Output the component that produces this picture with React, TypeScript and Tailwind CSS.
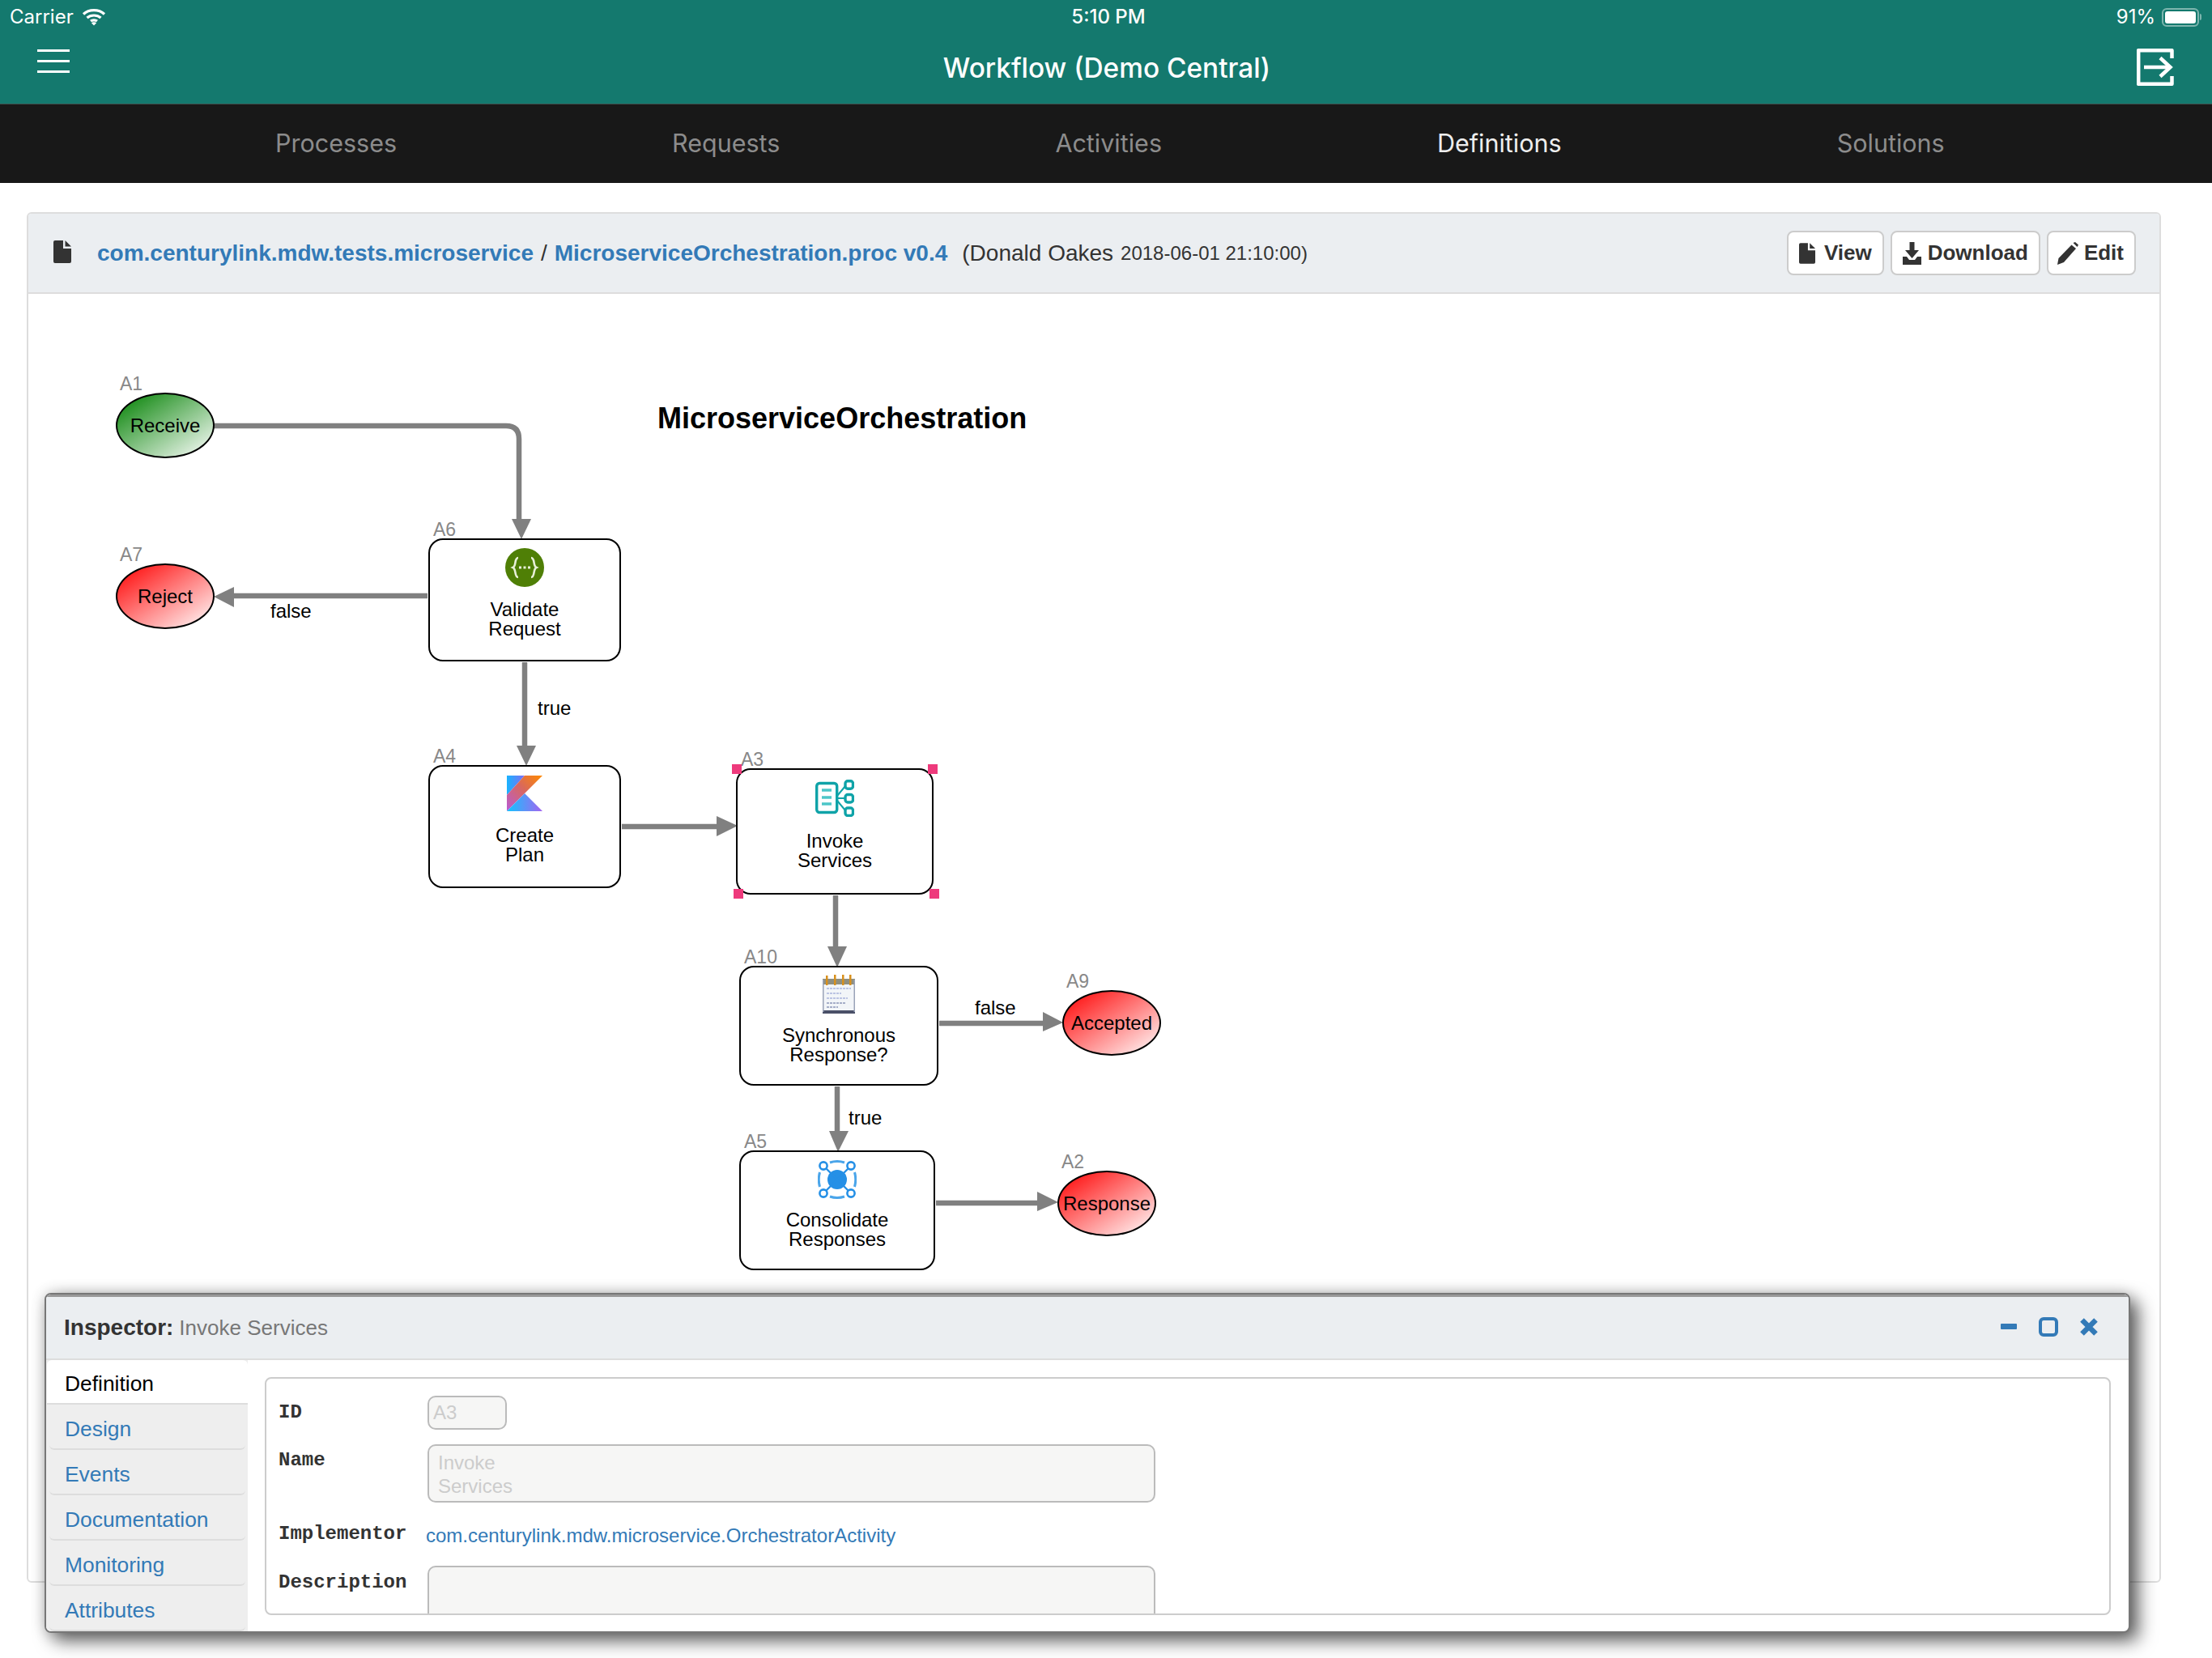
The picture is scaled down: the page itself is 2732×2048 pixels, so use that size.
import type { ReactNode } from 'react';

const navItems = ['Processes', 'Requests', 'Activities', 'Definitions', 'Solutions'];
const tabs = ['Design', 'Events', 'Documentation', 'Monitoring', 'Attributes'];

// -----------------------------------------------------------------------------
// Icons
// -----------------------------------------------------------------------------

function WifiIcon() {
  return (
    <svg width="30" height="22" viewBox="0 0 30 22" fill="none" stroke="white" strokeWidth="3.2">
      <path d="M2 7.5C9 1 21 1 28 7.5" />
      <path d="M6.5 12C11 8 19 8 23.5 12" />
      <path d="M11 16C13 14.4 17 14.4 19 16" />
      <path d="M15 21.5L11.8 18.2C13.5 17 16.5 17 18.2 18.2Z" fill="white" stroke="none" />
    </svg>
  );
}

function ExitIcon() {
  return (
    <svg width="46" height="46" viewBox="0 0 46 46" fill="none" stroke="white" strokeWidth="4.5">
      <path d="M43.5 12V2.2H2.2V43.8H43.5V34" strokeLinejoin="round" />
      <path d="M9 23H41" />
      <path d="M29 11.5L41.5 23L29 34.5" />
    </svg>
  );
}

function FileIcon({ className }: { className: string }) {
  return (
    <svg className={className} viewBox="0 0 22 28" fill="#333">
      <path d="M0 2Q0 0 2 0H12V10H22V26Q22 28 20 28H2Q0 28 0 26Z" />
      <path d="M14.5 0L22 7.5H14.5Z" />
    </svg>
  );
}

function DownloadIcon() {
  return (
    <svg className="h-[28px] w-[23px]" viewBox="0 0 23 28" fill="#333">
      <path d="M8.5 0H14.5V10H20L11.5 20L3 10H8.5Z" />
      <path d="M0 18H5L8 22H15L18 18H23V28H0Z" />
    </svg>
  );
}

function PencilIcon() {
  return (
    <svg className="h-[28px] w-[27px]" viewBox="0 0 27 28" fill="#333">
      <path d="M18.5 3.5L24 8L9 25L1 28L2.5 20Z" />
      <path d="M20.5 1L23 0L27 3.5L25.5 6Z" />
    </svg>
  );
}

function SwaggerIcon() {
  return (
    <svg width="48" height="48" viewBox="0 0 48 48">
      <circle cx="24" cy="24" r="24" fill="#4f7f06" />
      <g fill="none" stroke="#e8f0d8" strokeWidth="2.6">
        <path d="M16 12C11 12 14 22 9.5 24C14 26 11 36 16 36" />
        <path d="M32 12C37 12 34 22 38.5 24C34 26 37 36 32 36" />
      </g>
      <g fill="#e8f0d8">
        <rect x="17" y="22.5" width="3" height="3" />
        <rect x="22.5" y="22.5" width="3" height="3" />
        <rect x="28" y="22.5" width="3" height="3" />
      </g>
    </svg>
  );
}

function KotlinIcon() {
  return (
    <svg width="44" height="44" viewBox="0 0 44 44">
      <defs>
        <linearGradient id="kotlinBand" x1="0" y1="1" x2="1" y2="0">
          <stop offset="0" stopColor="#b75bd8" />
          <stop offset="0.55" stopColor="#d9685c" />
          <stop offset="1" stopColor="#ff8a00" />
        </linearGradient>
        <linearGradient id="kotlinTop" x1="0" y1="0" x2="1" y2="0">
          <stop offset="0" stopColor="#18b4ff" />
          <stop offset="1" stopColor="#7f6cf5" />
        </linearGradient>
        <linearGradient id="kotlinBottom" x1="0" y1="0.5" x2="1" y2="0.5">
          <stop offset="0" stopColor="#12c5ff" />
          <stop offset="1" stopColor="#a463f0" />
        </linearGradient>
      </defs>
      <path d="M0 0H22L0 24Z" fill="url(#kotlinTop)" />
      <path d="M22 0H44L22 22L0 44V24Z" fill="url(#kotlinBand)" />
      <path d="M22 22L44 44H0Z" fill="url(#kotlinBottom)" />
    </svg>
  );
}

function ServicesIcon() {
  return (
    <svg width="48" height="46" viewBox="0 0 48 46" fill="none" stroke="#0fa3a8" strokeWidth="3.4">
      <rect x="1.7" y="4.5" width="25" height="36" rx="3.5" />
      <g stroke="#4cc6c8" strokeWidth="3.5">
        <path d="M8 13H20" />
        <path d="M8 22H20" />
        <path d="M8 30H20" />
      </g>
      <rect x="37" y="1.7" width="9.5" height="9.5" rx="3" />
      <rect x="37" y="18.5" width="9.5" height="9.5" rx="3" />
      <rect x="37" y="35" width="9.5" height="9.5" rx="3" />
      <path d="M27 20L37 8M27 23H37M27 26L37 38" strokeWidth="2" />
    </svg>
  );
}

function NotepadIcon() {
  return (
    <svg width="42" height="48" viewBox="0 0 42 48">
      <rect x="1" y="6" width="40" height="42" fill="#f2f5f8" />
      <rect x="1" y="5" width="40" height="7" fill="#8f8f80" />
      <rect x="1" y="44" width="40" height="4" fill="#4a5068" />
      <rect x="1" y="6" width="1.5" height="40" fill="#9aa3b8" />
      <rect x="39.5" y="6" width="1.5" height="40" fill="#9aa3b8" />
      <g fill="#d8901c">
        <rect x="5" y="1" width="2.5" height="12" />
        <rect x="15" y="0" width="2.5" height="13" />
        <rect x="25" y="0" width="2.5" height="13" />
        <rect x="34" y="0" width="2.5" height="13" />
      </g>
      <g stroke="#a9b4dc" strokeWidth="1.6" strokeDasharray="3 1">
        <path d="M6 17H36" />
        <path d="M6 23H24" />
        <path d="M6 29H32" />
        <path d="M6 35H30" stroke="#8c96b8" />
        <path d="M6 40H20" stroke="#8c96b8" />
      </g>
    </svg>
  );
}

function ConsolidateIcon() {
  return (
    <svg width="48" height="48" viewBox="0 0 48 48" fill="none" stroke="#2590e6" strokeWidth="2.4">
      <circle cx="24" cy="24" r="12" fill="#2590e6" stroke="none" />
      <g strokeWidth="2.6">
        <circle cx="7" cy="7" r="4.6" />
        <circle cx="41" cy="7" r="4.6" />
        <circle cx="7" cy="41" r="4.6" />
        <circle cx="41" cy="41" r="4.6" />
      </g>
      <path d="M10 10L38 38M38 10L10 38" />
      <g stroke="#4aa5ea" strokeWidth="3">
        <path d="M15 3Q24 0 33 3" />
        <path d="M15 45Q24 48 33 45" />
        <path d="M2.5 15Q0 24 2.5 33" />
        <path d="M45.5 15Q48 24 45.5 33" />
      </g>
    </svg>
  );
}

// -----------------------------------------------------------------------------
// Diagram parts
// -----------------------------------------------------------------------------

function StepBox({
  id,
  className,
  icon,
  lines,
}: {
  id: string;
  className: string;
  icon: ReactNode;
  lines: string[];
}) {
  return (
    <div className={`absolute flex flex-col items-center rounded-[18px] border-2 border-black bg-white ${className}`}>
      <span className="absolute left-[4px] -top-[25px] text-[23px] leading-[24px] text-[#888]">{id}</span>
      {icon}
      <div className="text-center text-[24px] leading-[24px] text-black">
        {lines.map((line) => (
          <div key={line}>{line}</div>
        ))}
      </div>
    </div>
  );
}

function Terminal({
  id,
  label,
  className,
  tone,
}: {
  id: string;
  label: string;
  className: string;
  tone: 'green' | 'red';
}) {
  return (
    <div className={`absolute h-[81px] w-[122px] ${className}`}>
      <span className="absolute left-[5px] -top-[23px] text-[23px] leading-[24px] text-[#888]">{id}</span>
      <div
        className={`flex h-full w-full items-center justify-center rounded-[50%] border-2 border-black bg-linear-to-br/srgb text-[24px] text-black ${
          tone === 'green' ? 'from-[#008000] to-white' : 'from-[#ff0000] to-white'
        }`}
      >
        {label}
      </div>
    </div>
  );
}

function Handle({ className }: { className: string }) {
  return <span className={`absolute h-[12px] w-[12px] bg-[#ee3a7c] ${className}`} />;
}

function LinkLabel({ text, className }: { text: string; className: string }) {
  return <span className={`absolute text-[24px] leading-[24px] text-black ${className}`}>{text}</span>;
}

// Connectors, drawn in page coordinates through the viewBox
function Connectors() {
  return (
    <svg className="absolute inset-0 h-full w-full" viewBox="35 363 2632 1590">
      <g fill="none" stroke="#808080" strokeWidth="6.5">
        <path d="M264 526H625Q641 526 641 542V645" />
        <path d="M528 736H285" />
        <path d="M648 818V925" />
        <path d="M768 1021H890" />
        <path d="M1032 1106V1172" />
        <path d="M1160 1264H1292" />
        <path d="M1034 1342V1400" />
        <path d="M1156 1486H1286" />
      </g>
      <g fill="#808080">
        <polygon points="632,641 656,641 644,666" />
        <polygon points="289,725 289,750 264,737" />
        <polygon points="638,921 662,921 650,946" />
        <polygon points="885,1008 885,1033 911,1020" />
        <polygon points="1022,1169 1046,1169 1034,1195" />
        <polygon points="1288,1250 1288,1274 1313,1263" />
        <polygon points="1024,1397 1048,1397 1035,1423" />
        <polygon points="1281,1472 1281,1496 1307,1485" />
      </g>
    </svg>
  );
}

function Diagram() {
  return (
    <div className="relative flex-1">
      <Connectors />
      <h1 className="absolute left-[777px] top-[134px] text-[36px] font-bold leading-[40px] text-black">
        MicroserviceOrchestration
      </h1>

      <Terminal id="A1" label="Receive" tone="green" className="left-[108px] top-[122px]" />
      <Terminal id="A7" label="Reject" tone="red" className="left-[108px] top-[333px]" />
      <Terminal id="A9" label="Accepted" tone="red" className="left-[1277px] top-[860px]" />
      <Terminal id="A2" label="Response" tone="red" className="left-[1271px] top-[1083px]" />

      <StepBox
        id="A6"
        className="left-[494px] top-[302px] h-[152px] w-[238px]"
        lines={['Validate', 'Request']}
        icon={
          <div className="mt-[10px] mb-[16px]">
            <SwaggerIcon />
          </div>
        }
      />
      <StepBox
        id="A4"
        className="left-[494px] top-[582px] h-[152px] w-[238px]"
        lines={['Create', 'Plan']}
        icon={
          <div className="mt-[11px] mb-[18px]">
            <KotlinIcon />
          </div>
        }
      />
      <StepBox
        id="A3"
        className="left-[874px] top-[586px] h-[156px] w-[244px]"
        lines={['Invoke', 'Services']}
        icon={
          <div className="mt-[12px] mb-[18px]">
            <ServicesIcon />
          </div>
        }
      />
      <Handle className="left-[869px] top-[581px]" />
      <Handle className="left-[1111px] top-[581px]" />
      <Handle className="left-[871px] top-[735px]" />
      <Handle className="left-[1113px] top-[735px]" />

      <StepBox
        id="A10"
        className="left-[878px] top-[830px] h-[148px] w-[246px]"
        lines={['Synchronous', 'Response?']}
        icon={
          <div className="mt-[9px] mb-[15px]">
            <NotepadIcon />
          </div>
        }
      />
      <StepBox
        id="A5"
        className="left-[878px] top-[1058px] h-[148px] w-[242px]"
        lines={['Consolidate', 'Responses']}
        icon={
          <div className="mt-[10px] mb-[14px]">
            <ConsolidateIcon />
          </div>
        }
      />

      <LinkLabel text="false" className="left-[299px] top-[380px]" />
      <LinkLabel text="true" className="left-[629px] top-[500px]" />
      <LinkLabel text="false" className="left-[1169px] top-[870px]" />
      <LinkLabel text="true" className="left-[1013px] top-[1006px]" />
    </div>
  );
}

// -----------------------------------------------------------------------------
// Inspector
// -----------------------------------------------------------------------------

function FieldLabel({ text, className }: { text: string; className: string }) {
  return (
    <div
      className={`w-[184px] shrink-0 font-['Liberation_Mono',monospace] text-[24px] font-bold leading-[24px] text-[#333] ${className}`}
    >
      {text}
    </div>
  );
}

function Inspector() {
  return (
    <div className="absolute left-[55px] top-[1597px] flex h-[420px] w-[2576px] flex-col overflow-hidden rounded-[8px] border-2 border-[#777] bg-white shadow-[10px_10px_22px_rgba(0,0,0,0.6),0_0_18px_rgba(0,0,0,0.2)]">
      <div className="flex h-[81px] shrink-0 items-center justify-between border-t-[3px] border-b-2 border-t-[#999] border-b-[#ddd] bg-[#ebeef1] pl-[22px] pr-[38px]">
        <div className="-mt-px">
          <span className="text-[28px] font-bold text-[#333]">Inspector:</span>
          <span className="ml-[7px] text-[26px] text-[#777]">Invoke Services</span>
        </div>
        <div className="-mt-[3px] flex items-center gap-[27px]">
          <span className="ml-[2px] h-[7px] w-[20px] rounded-[1px] bg-[#337ab7]" />
          <span className="h-[24px] w-[24px] rounded-[6px] border-4 border-[#337ab7]" />
          <svg width="22" height="22" viewBox="0 0 22 22" stroke="#337ab7" strokeWidth="6.5">
            <path d="M2.5 2.5L19.5 19.5M19.5 2.5L2.5 19.5" />
          </svg>
        </div>
      </div>

      <div className="flex flex-1 overflow-hidden">
        <div className="w-[249px] shrink-0 bg-[#eee] pl-[1px]">
          <div className="flex h-[55px] items-center rounded-t-[6px] border-b-2 border-[#ddd] bg-white pl-[22px] pt-[6px] text-[26.4px] text-black">
            Definition
          </div>
          {tabs.map((tab) => (
            <div
              key={tab}
              className="mx-[3px] flex h-[56px] items-center rounded-b-[6px] border-b-2 border-[#ddd] pl-[19px] pt-[7px] text-[26.4px] text-[#337ab7]"
            >
              {tab}
            </div>
          ))}
        </div>

        <div className="flex-1 pt-[21px] pb-[20px] pl-[21px] pr-[22px]">
          <div className="flex h-full flex-col gap-[18px] overflow-hidden rounded-[8px] border-2 border-[#ccc] pt-[21px] pl-[15px]">
            <div className="flex shrink-0">
              <FieldLabel text="ID" className="pt-[9px]" />
              <div className="flex h-[42px] w-[98px] items-center rounded-[10px] border-2 border-[#bbb] bg-[#f6f6f5] pl-[5px] text-[24px] text-[#ccc]">
                A3
              </div>
            </div>
            <div className="flex shrink-0">
              <FieldLabel text="Name" className="pt-[8px]" />
              <div className="h-[72px] w-[899px] rounded-[10px] border-2 border-[#bbb] bg-[#f6f6f5] pl-[11px] pt-[6px] text-[24px] leading-[29px] text-[#ccc]">
                <div>Invoke</div>
                <div>Services</div>
              </div>
            </div>
            <div className="flex h-[42px] shrink-0">
              <FieldLabel text="Implementor" className="pt-[9px]" />
              <span className="-ml-[2px] pt-[9px] text-[24px] leading-[28px] text-[#337ab7]">
                com.centurylink.mdw.microservice.OrchestratorActivity
              </span>
            </div>
            <div className="flex shrink-0">
              <FieldLabel text="Description" className="pt-[9px]" />
              <div className="h-[100px] w-[899px] shrink-0 rounded-[10px] border-2 border-[#bbb] bg-[#f6f6f5]" />
            </div>
          </div>
        </div>
      </div>
    </div>
  );
}

// -----------------------------------------------------------------------------
// Page
// -----------------------------------------------------------------------------

function ToolButton({ icon, label, className }: { icon: ReactNode; label: string; className: string }) {
  return (
    <button
      className={`flex h-[55px] items-center rounded-[8px] border-2 border-[#ccc] bg-white pr-[13px] text-[26px] font-bold text-[#333] ${className}`}
    >
      {icon}
      {label}
    </button>
  );
}

export default function App() {
  return (
    <div className="relative h-[2048px] w-[2732px] overflow-hidden bg-white font-['Liberation_Sans',sans-serif]">
      <header className="flex h-[129px] flex-col border-b border-[#3f4f4c] bg-[#14796e] font-['Inter',sans-serif] text-white">
        <div className="grid h-[40px] grid-cols-3 items-center px-[12px] pt-[2px] text-[24px]">
          <div className="flex items-center gap-[10px]">
            Carrier
            <WifiIcon />
          </div>
          <div className="pl-[6px] text-center font-medium">5:10 PM</div>
          <div className="flex items-center justify-end gap-[8px] pr-[4px]">
            91%
            <span className="relative flex h-[23px] w-[46px] items-center rounded-[6px] border-2 border-[#7db5ae] p-[2px]">
              <span className="h-full w-[38px] rounded-[3px] bg-white" />
              <span className="absolute -right-[5px] h-[8px] w-[2px] rounded-r-[2px] bg-[#7db5ae]" />
            </span>
          </div>
        </div>
        <div className="flex flex-1 items-center justify-between pl-[46px] pr-[47px]">
          <div className="-mt-[18px] flex w-[40px] flex-col gap-[10px]">
            <span className="h-[3px] bg-white" />
            <span className="h-[3px] bg-white" />
            <span className="h-[3px] bg-white" />
          </div>
          <div className="ml-[9px] text-[33.4px] font-medium">Workflow (Demo Central)</div>
          <div className="-mt-[3px]">
            <ExitIcon />
          </div>
        </div>
      </header>

      <nav className="flex h-[97px] items-center gap-[340px] bg-[#181818] pb-[2px] pl-[340px] font-['Inter',sans-serif] text-[30.5px]">
        {navItems.map((item) => (
          <span key={item} className={item === 'Definitions' ? 'text-[#eeeeee]' : 'text-[#8c8c8c]'}>
            {item}
          </span>
        ))}
      </nav>

      <main className="ml-[33px] mt-[36px] flex h-[1693px] w-[2636px] flex-col rounded-[6px] border-2 border-[#ddd]">
        <div className="flex h-[99px] shrink-0 items-center justify-between rounded-t-[4px] border-b-2 border-[#ddd] bg-[#ebeef1] pl-[31px] pr-[29px]">
          <div className="flex items-center text-[28px] text-[#333]">
            <FileIcon className="-mt-[4px] mr-[32px] h-[28px] w-[22px]" />
            <span className="font-bold text-[#337ab7]">com.centurylink.mdw.tests.microservice</span>
            <span className="mx-[9px]">/</span>
            <span className="font-bold text-[#337ab7]">MicroserviceOrchestration.proc v0.4</span>
            <span className="ml-[18px]">(Donald Oakes</span>
            <span className="ml-[9px] text-[24px]">2018-06-01 21:10:00)</span>
          </div>
          <div className="flex gap-[8px]">
            <ToolButton icon={<FileIcon className="h-[28px] w-[20px]" />} label="View" className="gap-[11px] pl-[13px]" />
            <ToolButton icon={<DownloadIcon />} label="Download" className="gap-[8px] pl-[13px]" />
            <ToolButton icon={<PencilIcon />} label="Edit" className="gap-[7px] pl-[10px]" />
          </div>
        </div>
        <Diagram />
      </main>

      <Inspector />
    </div>
  );
}
